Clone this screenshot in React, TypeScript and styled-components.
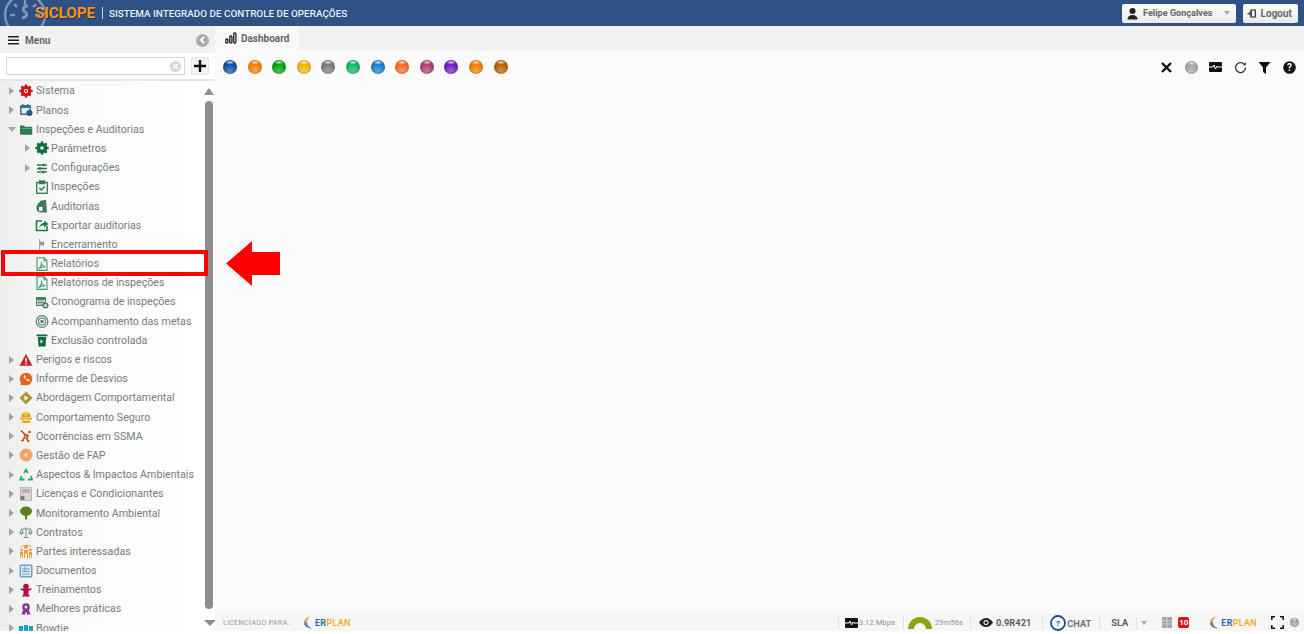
import React from "react";
import styled, { createGlobalStyle } from "styled-components";

const Global = createGlobalStyle`
  html, body { margin: 0; padding: 0; height: 100%; overflow: hidden; background: #fff; }
  #root { height: 100%; }
  * { box-sizing: border-box; }
`;

const Page = styled.div`
  position: relative; width: 1304px; height: 634px; overflow: hidden; background: #fff; padding-bottom: 3px;
  display: flex; flex-direction: column;
  font-family: Roboto, "Liberation Sans", sans-serif; color: #6e6e6e;
`;
const Header = styled.header`
  position: relative; flex: 0 0 26px; height: 26px; background: #2f5183; overflow: hidden;
  display: flex; align-items: center; padding-left: 35px;
`;
const LogoMark = styled.svg`position: absolute; left: 2px; top: -8px;`;
const Brand = styled.span`
  position: relative; font-size: 15.3px; font-weight: 700; letter-spacing: -0.1px; color: #f7941d;
  text-shadow: 1px 1px 1px #1d3358; width: 67px;
`;
const Slash = styled.span`width: 1px; height: 12px; background: #c8d3e2; margin-right: 6px;`;
const AppTitle = styled.span`font-size: 9.9px; font-weight: 500; color: #e9eef5; white-space: nowrap;`;
const HeaderActions = styled.div`margin-left: auto; margin-right: 6px; display: flex; gap: 7px;`;
const HeaderButton = styled.div<{ $w: number; $fs: number }>`
  width: ${p => p.$w}px; height: 19px; background: linear-gradient(#fdfdfd, #eaeaea); border-radius: 2px;
  display: flex; align-items: center; padding: 0 6px 0 4px; gap: 4px;
  font-size: ${p => p.$fs}px; font-weight: 700; color: #666; white-space: nowrap;
`;
const Caret = styled.span`
  width: 0; height: 0; border-left: 3.5px solid transparent; border-right: 3.5px solid transparent;
  border-top: 4px solid #a8a8a8; margin-left: auto;
`;
const Body = styled.div`flex: 1; display: flex; min-height: 0;`;
const Sidebar = styled.aside`
  flex: 0 0 215px; width: 215px; display: flex; flex-direction: column; background: #fff;
`;
const MenuBar = styled.div`
  flex: 0 0 27px; background: #f1f1f1; display: flex; align-items: center; padding: 1px 6px 0 8px; gap: 6px;
  font-size: 10px; font-weight: 700; color: #666;
`;
const Back = styled.span`
  margin-left: auto; width: 13px; height: 13px; border-radius: 50%; background: #ababab; color: #fff;
  display: flex; align-items: center; justify-content: center;
`;
const SearchRow = styled.div`
  flex: 0 0 28px; display: flex; align-items: center; padding: 0 6px; gap: 6px; background: #fff;
  border-bottom: 2px solid #e6e6e6;
`;
const Search = styled.div`
  width: 179px; height: 18px; border: 1px solid #d8d8d8; background: #fff; position: relative;
  display: flex; align-items: center; justify-content: flex-end; padding-right: 3px;
`;
const Clear = styled.span`
  width: 11px; height: 11px; border-radius: 50%; background: #d5d5d5; color: #fff;
  display: flex; align-items: center; justify-content: center;
`;
const AddButton = styled.div`
  width: 18px; height: 18px; background: #f2f2f2; border-radius: 2px; border: 1px solid #e6e6e6;
  display: flex; align-items: center; justify-content: center;
`;
const Tree = styled.nav`
  position: relative; flex: 1; overflow: hidden; padding-top: 0.3px;
  background: linear-gradient(90deg, #ededed 0, #fafafa 60px, #fff 200px);
`;
const Row = styled.div<{ $level: number }>`
  height: 19.2px; display: flex; align-items: center; white-space: nowrap;
  padding-left: ${p => (p.$level ? 25 : 9)}px; font-size: 10.7px; color: #757d79;
`;
const Toggle = styled.span<{ $state: string }>`
  flex: 0 0 6px; width: 6px; height: 8px; margin-right: 4px; display: inline-block;
  ${p => p.$state === "closed" && `border-left: 5px solid #a5a5a5; border-top: 4px solid transparent; border-bottom: 4px solid transparent;`}
  ${p => p.$state === "open" && `border-top: 5px solid #a5a5a5; border-left: 4px solid transparent; border-right: 4px solid transparent; height: 0; width: 0; flex-basis: 8px; margin-left: -1px; margin-right: 3px;`}
`;
const IconBox = styled.span<{ $level: number }>`
  flex: 0 0 14px; width: 14px; height: 14px; margin-right: ${p => (p.$level ? 2 : 3)}px; display: flex; align-items: center; justify-content: center;
`;
const ScrollUp = styled.span`
  position: absolute; right: 1px; top: 7px; width: 0; height: 0;
  border-left: 5px solid transparent; border-right: 5px solid transparent; border-bottom: 7px solid #8f8f8f;
`;
const ScrollDown = styled.span`
  position: absolute; right: -1px; top: 539px; width: 0; height: 0;
  border-left: 6px solid transparent; border-right: 6px solid transparent; border-top: 6px solid #8a8a8a;
`;
const Thumb = styled.span`
  position: absolute; left: 205px; top: 20px; width: 8px; height: 508px; border-radius: 4px; background: #8e8e8e;
`;
const Main = styled.main`flex: 1; display: flex; flex-direction: column; min-width: 0; background: #fbfbfb;`;
const TabBar = styled.div`flex: 0 0 24px; background: #f1f1f1; display: flex;`;
const Tab = styled.div`
  width: 84px; background: #f9f9f9; display: flex; align-items: center; gap: 4px; padding-left: 10px;
  font-size: 10px; font-weight: 700; color: #666;
`;
const Toolbar = styled.div`
  flex: 0 0 34px; display: flex; align-items: center; padding: 0 8px 0 8px;
`;
const Balls = styled.div`display: flex; gap: 10.6px;`;
const Ball = styled.span<{ $c: string; $s?: number }>`
  display: block; flex: none; width: ${p => p.$s ?? 14}px; height: ${p => p.$s ?? 14}px; border-radius: 50%;
  background: radial-gradient(ellipse 34% 16% at 50% 17%, rgba(255,255,255,.8), transparent 100%),
    radial-gradient(circle at 50% 80%, rgba(255,255,255,.32), transparent 55%), ${p => p.$c};
  box-shadow: inset 0 0 1.5px rgba(0,0,0,.45);
`;
const ToolIcons = styled.div`margin-left: auto; display: flex; align-items: center; gap: 11.6px;`;
const Content = styled.div`flex: 1;`;
const Footer = styled.footer`
  flex: 0 0 18px; background: #f6f6f6; display: flex; align-items: center; overflow: hidden;
  font-size: 7.7px; color: #949494; padding-top: 1px; position: relative;
`;
const Licensed = styled.span`margin-left: 8px; font-size: 7.5px; letter-spacing: .1px; color: #9ba0a6; width: 80px; white-space: nowrap;`;
const Erplan = styled.span`display: flex; align-items: center; gap: 1px; font-size: 9px; font-weight: 500; color: #f5a623; letter-spacing: .3px;`;
const Er = styled.span`color: #2d6aa8; font-weight: 700;`;
const FootRight = styled.div`margin-left: auto; display: flex; align-items: center; height: 100%;`;
const Sep = styled.span<{ $m: number; $r: number }>`width: 1px; height: 12px; background: #e0e0e0; margin: 0 ${p => p.$r}px 0 ${p => p.$m}px;`;
const Gauge = styled.span`
  width: 24px; height: 12px; margin-right: 3px; overflow: hidden; position: relative; display: block;
`;
const GaugeRing = styled.span`
  display: block; width: 24px; height: 24px; border-radius: 50%; border: 6px solid #8aa60f; background: transparent;
`;
const Strong = styled.span`font-size: 9.3px; font-weight: 700; color: #5e5e5e;`;
const Chat = styled.span`font-size: 9.2px; font-weight: 700; color: #6a7480; margin-top: 2px;`;
const Badge = styled.span`
  width: 11px; height: 11px; border-radius: 2px; background: #d81515; color: #fff; font-size: 8px; font-weight: 700;
  display: flex; align-items: center; justify-content: center;
`;
const Gap = styled.span<{ $w: number }>`display: block; flex: 0 0 ${p => p.$w}px; width: ${p => p.$w}px;`;
const Highlight = styled.div`
  position: absolute; left: 1px; top: 250px; width: 207px; height: 26px; border: 4px solid #f00;
  pointer-events: none;
`;
const ArrowMark = styled.svg`position: absolute; left: 226px; top: 241px;`;

const I: Record<string, React.ReactNode> = {
  gearRed: <svg width="14" height="14" viewBox="0 0 14 14"><g fill="#c8161d"><circle cx="7" cy="7" r="5.3"/>{[0,45,90,135].map(a=><rect key={a} x="5.8" y="0.4" width="2.4" height="13.2" transform={`rotate(${a} 7 7)`}/>)}</g><circle cx="7" cy="7" r="2" fill="#fff"/><circle cx="7" cy="7" r="1" fill="#c8161d"/></svg>,
  gearGreen: <svg width="14" height="14" viewBox="0 0 14 14"><g fill="#0b6e3c"><circle cx="7" cy="7" r="5.3"/>{[0,45,90,135].map(a=><rect key={a} x="5.8" y="0.4" width="2.4" height="13.2" transform={`rotate(${a} 7 7)`}/>)}</g><circle cx="7" cy="7" r="1.8" fill="#fff"/></svg>,
  plans: <svg width="14" height="14" viewBox="0 0 14 14"><rect x="1" y="2" width="11" height="10" rx="1" fill="#3f6c9b"/><rect x="2.5" y="5" width="8" height="5.5" fill="#dfe8f2"/><rect x="3" y="1" width="1.5" height="2.5" fill="#3f6c9b"/><rect x="8" y="1" width="1.5" height="2.5" fill="#3f6c9b"/><circle cx="10.5" cy="10" r="3" fill="#27568c"/></svg>,
  folder: <svg width="14" height="14" viewBox="0 0 14 14"><path d="M1 3.500h4l1 1.300h6.500a.7.7 0 0 1 .7.7V12a.7.7 0 0 1-.7.7H1.700A.7.7 0 0 1 1 12z" fill="#2c7d4d"/><path d="M2 6h11v1H2z" fill="#60a57b"/></svg>,
  sliders: <svg width="14" height="14" viewBox="0 0 14 14" stroke="#2c7d4d" strokeWidth="1.300"><path d="M2 4h10M2 7.500h10M2 11h10"/><path d="M8.500 2.700v2.600M5 6.200v2.600M8 9.700v2.600" strokeWidth="2"/></svg>,
  clip: <svg width="14" height="14" viewBox="0 0 14 14" fill="none" stroke="#2c7d4d" strokeWidth="1.300"><rect x="1.700" y="2.500" width="10.600" height="10.800"/><rect x="4.500" y="1" width="5" height="2.600" fill="#2c7d4d"/><path d="M4.300 8l2 2 3.400-3.600" strokeWidth="1.500"/></svg>,
  audit: <svg width="14" height="14" viewBox="0 0 14 14"><path d="M6 1.500L11 1l1 12.500H5.500C3 13 1.300 11.500 1.300 9 1.300 6.500 3 4 6 1.500z" fill="#3f7a58"/><path d="M4 8h3.500v3.800H4z" fill="#fff"/></svg>,
  exportI: <svg width="14" height="14" viewBox="0 0 14 14" fill="none"><path d="M7 3H1.500v9.500H12V8" stroke="#1d7a4a" strokeWidth="1.600"/><path d="M4 10c.5-3 2.500-5 5-5V2.500L13.500 6 9 9.500V7.200C7 7.200 5 8.200 4 10z" fill="#1d7a4a"/></svg>,
  flag: <svg width="14" height="14" viewBox="0 0 14 14"><path d="M4 2h1.200v11H4z" fill="#9aa89e"/><path d="M5.200 4l2 1.500L9 4v5L7 7.700 5.200 9z" fill="#7f9a8a"/></svg>,
  pdf: <svg width="14" height="14" viewBox="0 0 14 14" fill="none" stroke="#3f9a6d" strokeWidth="1.100"><path d="M2 .8h7l3 3v9.600H2z"/><path d="M9 .8v3h3"/><path d="M3.500 11.500c2-1 3.500-4 3-6.300-.4 2.200 1 4.400 4 4.600-2.200 0-4.500.4-7 1.700z"/></svg>,
  cal: <svg width="14" height="14" viewBox="0 0 14 14"><rect x="1" y="2" width="10" height="9" fill="#4f7d66"/><path d="M2 5h8v5H2z" fill="#dfe9e3"/><path d="M4 5v5M6 5v5M8 5v5M2 7.500h8" stroke="#4f7d66" strokeWidth=".7"/><circle cx="10.500" cy="10.500" r="3" fill="#4f7d66"/><circle cx="10.500" cy="10.500" r="1.500" fill="#dfe9e3"/></svg>,
  target: <svg width="14" height="14" viewBox="0 0 14 14" fill="none" stroke="#58806b" strokeWidth="1.200"><circle cx="7" cy="7.500" r="5.800"/><circle cx="7" cy="7.500" r="3.500"/><circle cx="7" cy="7.500" r="1.200" fill="#58806b"/></svg>,
  trash: <svg width="14" height="14" viewBox="0 0 14 14"><path d="M1.500 1.500h11v1.800h-11z" fill="#0b6e3c"/><path d="M2.800 4h8.400l-.7 9.500H3.500z" fill="#0b6e3c"/><path d="M5.500 6.500L8 8.500 5.500 10.500z" fill="#fff"/></svg>,
  warn: <svg width="14" height="14" viewBox="0 0 14 14"><path d="M7 1l6.500 11.800H.5z" fill="#c8211f"/><path d="M6.300 5h1.400v4.300H6.300zM6.300 10h1.400v1.400H6.300z" fill="#fff"/></svg>,
  phone: <svg width="14" height="14" viewBox="0 0 14 14"><circle cx="7" cy="7" r="6.300" fill="#e8601c"/><path d="M1.500 13.500l1-3.500 2.500 2.200z" fill="#e8601c"/><path d="M4.500 4c1 3 2.500 4.500 5.500 5.500l.6-1.500-2-1-.8.800c-.8-.5-1.400-1.100-1.800-1.900l.8-.8-1-2z" fill="#fff"/></svg>,
  diamond: <svg width="14" height="14" viewBox="0 0 14 14"><path d="M7 .5L13.500 7 7 13.500.5 7z" fill="#a9952f"/><path d="M5.500 4.500L9.500 7l-4 2.500z" fill="#fff"/></svg>,
  helmet: <svg width="14" height="14" viewBox="0 0 14 14"><path d="M2 7.500C2 4 4 2.200 7 2.200S12 4 12 7.500z" fill="#e7a91c"/><rect x="1" y="8" width="12" height="1.500" fill="#e7a91c"/><path d="M2.500 10.500h9l-1 2.500h-7z" fill="#e7a91c"/><rect x="6" y="1.500" width="2" height="4" fill="#f3cd70"/></svg>,
  fall: <svg width="14" height="14" viewBox="0 0 14 14" fill="none" stroke="#b8541a" strokeWidth="1.700"><circle cx="10.500" cy="3" r="1.300" fill="#b8541a" stroke="none"/><path d="M2 1.500l4 4 3 1-1.500 3L10 13M6.500 6L4 11.500H2"/></svg>,
  fap: <svg width="14" height="14" viewBox="0 0 14 14"><circle cx="7" cy="7" r="6.500" fill="#f4a566"/><circle cx="7" cy="7" r="1.800" fill="#fbe3cf"/></svg>,
  recycle: <svg width="14" height="14" viewBox="0 0 14 14" fill="none" stroke="#1faf63" strokeWidth="1.800"><path d="M5 5l2-3.200L9 5M12 8l1 3.500H9M2.500 8L1.200 11.500H5.500"/></svg>,
  license: <svg width="14" height="14" viewBox="0 0 14 14"><rect x="1.500" y="0" width="11" height="14" fill="#d8d8d8" stroke="#9f9f9f" strokeWidth=".7"/><path d="M3 3h8M3 5h8" stroke="#8f8f8f"/><circle cx="3.500" cy="11" r="2.200" fill="#7a7a7a"/></svg>,
  tree: <svg width="14" height="14" viewBox="0 0 14 14"><ellipse cx="7" cy="5.200" rx="6" ry="4.700" fill="#5f7f1c"/><path d="M6 8h2v5.500H6z" fill="#5f7f1c"/></svg>,
  scale: <svg width="14" height="14" viewBox="0 0 14 14" fill="none" stroke="#6c8d7d" strokeWidth=".9"><path d="M7 2v10M4.500 12.500h5M2 4h10M.8 8L2.500 4.200 4.200 8zM9.800 8l1.700-3.800L13.200 8z"/><path d="M.8 8c.8 1.300 2.600 1.300 3.400 0M9.800 8c.8 1.300 2.600 1.300 3.400 0" fill="#6c8d7d"/></svg>,
  people: <svg width="14" height="14" viewBox="0 0 14 14" fill="#f29a45"><circle cx="7" cy="3" r="2"/><circle cx="2.500" cy="6" r="1.500"/><circle cx="11.500" cy="6" r="1.500"/><path d="M5 6h4v8H8V9.500H6V14H5zM1 8h3v6H3v-3H2v3H1zM10 8h3v6h-1v-3h-1v3h-1z"/><path d="M1.500 3.500C3 .5 11 .5 12.500 3.500" stroke="#f29a45" fill="none"/></svg>,
  docs: <svg width="14" height="14" viewBox="0 0 14 14"><rect x=".5" y=".5" width="13" height="13" rx="1.500" fill="#6f9fcb"/><rect x="2" y="2" width="10" height="10" fill="#dfeaf5"/><path d="M3 5h8M3 7.500h8M3 10h8M6 2.500V7" stroke="#6f9fcb"/></svg>,
  train: <svg width="14" height="14" viewBox="0 0 14 14" fill="#b5094f"><circle cx="7" cy="3.500" r="2.800"/><path d="M1.500 5.500h11v1.300l-3 1V11l1.500 2.500H3L4.500 11V7.800l-3-1z"/></svg>,
  medal: <svg width="14" height="14" viewBox="0 0 14 14" fill="#7d3a8c"><circle cx="7" cy="5" r="3.800"/><circle cx="7" cy="5" r="1.500" fill="#e3d1e8"/><path d="M4 8l-1.500 5 2-.8 1.200.8L7 9.500l1.300 3.500 1.200-.8 2 .8L10 8z"/></svg>,
  bowtie: <svg width="14" height="14" viewBox="0 0 14 14" fill="#13a5c4"><rect x="0" y="5" width="4" height="6"/><rect x="5" y="4" width="4" height="7"/><rect x="10" y="5" width="4" height="6"/></svg>,
};

const rows: [number, string, string, string][] = [
  [0,"closed","gearRed","Sistema"],[0,"closed","plans","Planos"],[0,"open","folder","Inspeções e Auditorias"],
  [1,"closed","gearGreen","Parâmetros"],[1,"closed","sliders","Configurações"],[1,"none","clip","Inspeções"],
  [1,"none","audit","Auditorias"],[1,"none","exportI","Exportar auditorias"],[1,"none","flag","Encerramento"],
  [1,"none","pdf","Relatórios"],[1,"none","pdf","Relatórios de inspeções"],[1,"none","cal","Cronograma de inspeções"],
  [1,"none","target","Acompanhamento das metas"],[1,"none","trash","Exclusão controlada"],
  [0,"closed","warn","Perigos e riscos"],[0,"closed","phone","Informe de Desvios"],[0,"closed","diamond","Abordagem Comportamental"],
  [0,"closed","helmet","Comportamento Seguro"],[0,"closed","fall","Ocorrências em SSMA"],[0,"closed","fap","Gestão de FAP"],
  [0,"closed","recycle","Aspectos & Impactos Ambientais"],[0,"closed","license","Licenças e Condicionantes"],
  [0,"closed","tree","Monitoramento Ambiental"],[0,"closed","scale","Contratos"],[0,"closed","people","Partes interessadas"],
  [0,"closed","docs","Documentos"],[0,"closed","train","Treinamentos"],[0,"closed","medal","Melhores práticas"],[0,"closed","bowtie","Bowtie"],
];
const ballColors = ["#0d4fa3","#ee7f00","#00a30e","#f2b200","#7d7878","#12b567","#1c7cc7","#f26a21","#b03a6e","#6a1fc0","#f07c00","#b46100"];

const Ecg = ({ w = 13, h = 10 }: { w?: number; h?: number }) => (
  <svg width={w} height={h} viewBox="0 0 13 10"><rect width="13" height="10" rx="1" fill="#111"/><path d="M0 5h4l1-2 1.500 4L8 4l.7 1H13" stroke="#fff" strokeWidth="1" fill="none"/></svg>
);
const Crescent = () => (
  <svg width="11" height="13" viewBox="0 0 11 13"><path d="M8 .5C3.500 1 1 3.500 1 6.500s2.500 5.500 8 6C5.500 11 4 9 4 6.500S5 2 8 .5z" fill="#d9a869"/><path d="M1 6.500c0 3 2.500 5.500 8 6C5.500 11 4 9 4 6.500z" fill="#5b83b5"/></svg>
);

export default function App() {
  return (
    <Page>
      <Global />
      <Header>
        <LogoMark width="46" height="46" viewBox="0 0 46 46" fill="none" stroke="#7f95b6" strokeWidth="2.500">
          <circle cx="23" cy="23" r="20"/><path d="M8 23h5M33 23h5M23 8v5M12 12l3 3M34 12l-3 3"/><path d="M26 14c-5 0-6 4-3 6s2 5-3 6" strokeWidth="3"/>
        </LogoMark>
        <Brand>SICLOPE</Brand>
        <Slash />
        <AppTitle>SISTEMA INTEGRADO DE CONTROLE DE OPERAÇÕES</AppTitle>
        <HeaderActions>
          <HeaderButton $w={114} $fs={9.1}>
            <svg width="13" height="13" viewBox="0 0 13 13" fill="#222"><circle cx="6.500" cy="4" r="3"/><path d="M1.500 12.500c0-3 2-4.500 5-4.500s5 1.500 5 4.500z"/></svg>
            Felipe Gonçalves<Caret />
          </HeaderButton>
          <HeaderButton $w={55} $fs={10}>
            <svg width="13" height="13" viewBox="0 0 13 13" fill="#222"><path d="M6 1h6v11H6V10.500h4.500v-8H6z"/><path d="M6.500 1.500v10L4.500 12V1z"/><path d="M0.500 6h2.500v-2l2 2.500-2 2.500V7.500H.5z"/></svg>
            Logout
          </HeaderButton>
        </HeaderActions>
      </Header>
      <Body>
        <Sidebar>
          <MenuBar>
            <svg width="11" height="9" viewBox="0 0 11 9" fill="#222"><path d="M0 0h11v1.600H0zM0 3.500h11v1.600H0zM0 7h11v1.600H0z"/></svg>
            Menu
            <Back><svg width="7" height="8" viewBox="0 0 7 8" fill="none" stroke="#fff" strokeWidth="1.800"><path d="M5 .8L1.800 4 5 7.200"/></svg></Back>
          </MenuBar>
          <SearchRow>
            <Search><Clear><svg width="7" height="7" viewBox="0 0 7 7" stroke="#fff" strokeWidth="1.400"><path d="M1 1l5 5M6 1L1 6"/></svg></Clear></Search>
            <AddButton><svg width="12" height="12" viewBox="0 0 12 12" fill="#111"><path d="M4.800 0h2.400v4.800H12v2.400H7.200V12H4.800V7.200H0V4.800h4.800z"/></svg></AddButton>
          </SearchRow>
          <Tree>
            {rows.map(([level, state, icon, label]) => (
              <Row key={label} $level={level}>
                <Toggle $state={state} />
                <IconBox $level={level}>{I[icon]}</IconBox>
                {label}
              </Row>
            ))}
            <ScrollUp />
            <Thumb />
            <ScrollDown />
          </Tree>
        </Sidebar>
        <Main>
          <TabBar>
            <Tab>
              <svg width="12" height="12" viewBox="0 0 12 12" fill="none" stroke="#222" strokeWidth="1.300"><rect x=".7" y="7" width="2.200" height="4" rx="1"/><rect x="4.700" y="4" width="2.200" height="7" rx="1"/><rect x="8.700" y="1" width="2.200" height="10" rx="1"/></svg>
              Dashboard
            </Tab>
          </TabBar>
          <Toolbar>
            <Balls>{ballColors.map((c, i) => <Ball key={i} $c={c} />)}</Balls>
            <ToolIcons>
              <svg width="13" height="13" viewBox="0 0 13 13" stroke="#111" strokeWidth="2.400"><path d="M2 2l9 9M11 2l-9 9"/></svg>
              <Ball $c="#a3a3a3" $s={13} />
              <Ecg />
              <svg width="13" height="13" viewBox="0 0 13 13" fill="none" stroke="#333" strokeWidth="1.300"><path d="M11.500 6.500a5 5 0 1 1-1.500-3.500"/><path d="M11.800 1v3.200H8.600" fill="#333" stroke="none"/></svg>
              <svg width="13" height="13" viewBox="0 0 13 13" fill="#111"><path d="M.5 1h12L8 6.500V13L5 11V6.500z"/></svg>
              <svg width="13" height="13" viewBox="0 0 13 13"><circle cx="6.500" cy="6.500" r="6.300" fill="#111"/><text x="6.500" y="10" textAnchor="middle" fontSize="10" fontWeight="700" fill="#fff" fontFamily="Roboto">?</text></svg>
            </ToolIcons>
          </Toolbar>
          <Content />
          <Footer>
            <Licensed>LICENCIADO PARA:</Licensed>
            <Erplan><Crescent /><span><Er>ER</Er>PLAN</span></Erplan>
            <FootRight>
              <Sep $m={0} $r={6} />
              <Ecg />
              <Gap $w={1} />
              3.12 Mbps
              <Sep $m={8} $r={4} />
              <Gauge><GaugeRing /></Gauge>
              29m56s
              <Sep $m={7} $r={8} />
              <svg width="14" height="9" viewBox="0 0 14 9"><path d="M0 4.500C2 1.500 4.500 0 7 0s5 1.500 7 4.500C12 7.500 9.500 9 7 9S2 7.500 0 4.500z" fill="#222"/><circle cx="7" cy="4.500" r="2.500" fill="#fff"/><circle cx="7" cy="4.500" r="1.500" fill="#222"/></svg>
              <Gap $w={3} />
              <Strong>0.9R421</Strong>
              <Sep $m={11} $r={7} />
              <svg width="16" height="16" viewBox="0 0 16 16"><circle cx="8" cy="8" r="7" fill="#fff" stroke="#1d4f91" strokeWidth="1.800"/><text x="8" y="11" textAnchor="middle" fontSize="8" fontWeight="700" fill="#1d4f91" fontFamily="Roboto">?</text></svg>
              <Gap $w={1} />
              <Chat>CHAT</Chat>
              <Sep $m={8} $r={11} />
              <Strong>SLA</Strong>
              <Sep $m={8} $r={4} />
              <Caret />
              <Gap $w={15} />
              <svg width="10" height="11" viewBox="0 0 10 11"><rect width="10" height="11" fill="#a5a5a5"/><path d="M5 0v11M0 4h10M0 7h10" stroke="#ddd" strokeWidth=".7"/></svg>
              <Gap $w={6} />
              <Badge>10</Badge>
              <Gap $w={20} />
              <Erplan><Crescent /><span><Er>ER</Er>PLAN</span></Erplan>
              <Gap $w={14} />
              <svg width="13" height="13" viewBox="0 0 13 13" fill="none" stroke="#111" strokeWidth="1.500"><path d="M.8 4V.8H4M9 .8h3.200V4M12.200 9v3.200H9M4 12.200H.8V9"/></svg>
              <Gap $w={6} />
              <Ball $c="#a8a8a8" $s={9} />
              <Gap $w={5} />
            </FootRight>
          </Footer>
        </Main>
      </Body>
      <Highlight />
      <ArrowMark width="54" height="45" viewBox="0 0 54 45"><path d="M0 22.500L26 0v11h28v23H26v11z" fill="#f00"/></ArrowMark>
    </Page>
  );
}
